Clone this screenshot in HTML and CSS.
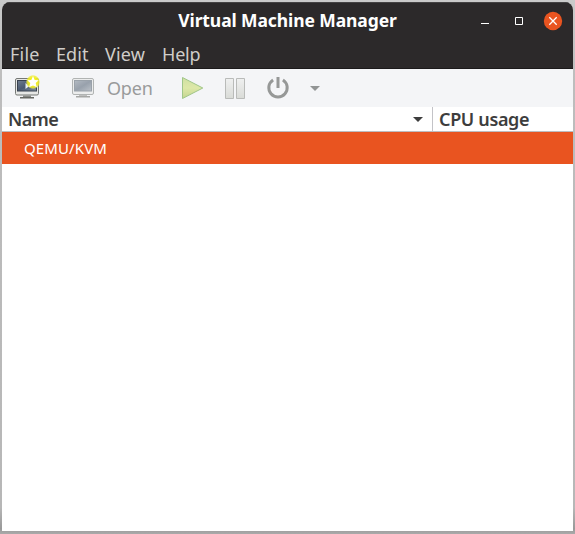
FILE: index.html
```html
<!DOCTYPE html>
<html lang="en">
<head>
<meta charset="utf-8">
<title>Virtual Machine Manager</title>
<link rel="stylesheet" href="styles.css">
</head>
<body>
<div class="window">
  <header class="titlebar">
    <h1 class="title">Virtual Machine Manager</h1>
    <div class="controls">
      <svg width="18" height="18" viewBox="0 0 18 18"><path d="M5 11.5h8" stroke="#fff"/></svg>
      <svg width="18" height="18" viewBox="0 0 18 18"><path d="M5.5 5.5h7v7h-7z" fill="none" stroke="#fff"/></svg>
      <svg width="18" height="18" viewBox="0 0 18 18"><circle cx="9" cy="9" r="9.2" fill="#e95420"/><path d="M5.3 5.3l7.4 7.4m0-7.4l-7.4 7.4" stroke="#fff" stroke-width="1.3"/></svg>
    </div>
  </header>
  <nav class="menubar">
    <span class="file">File</span><span class="edit">Edit</span><span class="view">View</span><span class="help">Help</span>
  </nav>
  <div class="toolbar">
    <svg class="new" width="26" height="24" viewBox="0 0 26 24">
      <defs>
        <linearGradient id="screen" x2="1" y2="1"><stop stop-color="#6f7d90"/><stop offset=".5" stop-color="#4a5970"/><stop offset="1" stop-color="#8290a2"/></linearGradient>
        <radialGradient id="glow"><stop offset=".6" stop-color="#f2ee22"/><stop offset=".85" stop-color="#f0ee32" stop-opacity=".75"/><stop offset="1" stop-color="#f0f060" stop-opacity="0"/></radialGradient>
      </defs>
      <rect x="1.5" y="2.5" width="23" height="16.5" rx="1.5" fill="#e6e7e5" stroke="#757875"/>
      <rect x="3.5" y="4.5" width="19" height="10.5" fill="url(#screen)" stroke="#39424f"/>
      <path d="M9 19.5h8v2H9z" fill="#888a86"/><path d="M6 21.8h14" stroke="#666863" stroke-width="1.6"/>
      <path d="M11.5 7v6l4-3z" fill="#e8edf3"/>
      <circle cx="19" cy="6" r="7.2" fill="url(#glow)"/>
      <path d="M19 .1l1.7 3.8 4 .3-3 2.9 1.2 4.2L19 9.4l-3.9 1.9 1.2-4.2-3-2.9 4-.3z" fill="#fff"/>
    </svg>
    <div class="open">
      <svg width="24" height="22" viewBox="0 0 24 22">
        <defs><linearGradient id="dim" x2="1" y2="1"><stop stop-color="#b3bac2"/><stop offset=".5" stop-color="#98a1ac"/><stop offset="1" stop-color="#bbc1c8"/></linearGradient></defs>
        <rect x="1.5" y="1.5" width="21" height="16" rx="1.5" fill="#eceded" stroke="#b1b4b3"/>
        <rect x="3.5" y="3.5" width="17" height="10.5" fill="url(#dim)" stroke="#9aa2aa"/>
        <path d="M8 18h8v2H8z" fill="#bfc0bf"/><path d="M5 19.7h14" stroke="#a6a7a5" stroke-width="1.5"/>
      </svg>
      <span>Open</span>
    </div>
    <svg class="play" width="24" height="24" viewBox="0 0 24 24"><defs><linearGradient id="green" x2="0" y2="1"><stop stop-color="#cfe0a2"/><stop offset=".5" stop-color="#dde8a8"/><stop offset="1" stop-color="#c4d58f"/></linearGradient></defs><path d="M1.5 1.5v21L21.8 12z" fill="url(#green)" stroke="#a0c689" stroke-linejoin="round"/></svg>
    <svg class="pause" width="20" height="21" viewBox="0 0 20 21"><defs><linearGradient id="gray" x2="0" y2="1"><stop stop-color="#eff0f0"/><stop offset="1" stop-color="#d9dbd7"/></linearGradient></defs><path d="M.5.5h8v20h-8zm11 0h8v20h-8z" fill="url(#gray)" stroke="#b9bbb9"/></svg>
    <svg class="power" width="24" height="24" viewBox="0 0 24 24"><path d="M7.1 3.9a9.2 9.2 0 1 0 9.8 0" fill="none" stroke="#969897" stroke-width="3"/><path d="M12 1v11" stroke="#969897" stroke-width="3"/></svg>
    <svg class="more" width="10" height="5" viewBox="0 0 10 5"><path d="M0 0h10L5 5z" fill="#929595"/></svg>
  </div>
  <main class="list">
    <div class="columns">
      <div class="column name-column"><span class="name">Name</span><svg width="10" height="5" viewBox="0 0 10 5"><path d="M0 0h10L5 5z" fill="#3d3d3d"/></svg></div>
      <div class="column cpu-column"><span class="cpu">CPU usage</span></div>
    </div>
    <div class="row"><span>QEMU/KVM</span></div>
  </main>
</div>
</body>
</html>
```
FILE: styles.css
```css
* { box-sizing: border-box; }
body {
  margin: 0;
  padding: 2px;
  height: 534px;
  overflow: hidden;
  background: linear-gradient(#cacaca, #bdbdbd 15%, #b7b7b7 95%, #999 99%, #aaa);
  font-family: "Noto Sans", sans-serif;
  font-size: 18px;
}
svg { display: block; flex: none; overflow: visible; }
span, h1 { white-space: nowrap; }
.window {
  width: 571px;
  height: 529px;
  overflow: hidden;
  border-radius: 8px 8px 0 0;
  background: #fff;
}
.titlebar {
  display: grid;
  grid-template-columns: 1fr auto 1fr;
  align-items: center;
  height: 37px;
  background: #2c292a;
  border-top: 1px solid #444243;
  color: #fff;
}
.title {
  grid-column: 2;
  margin: 0;
  padding-bottom: 2px;
  font-size: 17.5px;
  font-weight: 700;
  line-height: 34px;
  letter-spacing: -.1px;
}
.controls { display: flex; justify-content: flex-end; gap: 16px; padding-right: 11px; }
.menubar {
  display: flex;
  height: 30px;
  padding-left: 8px;
  background: #2c292a;
  border-bottom: 1px solid #1c1a1b;
  color: #d0cdc9;
  line-height: 30px;
}
.menubar span { flex: none; }
.file { width: 46px; letter-spacing: .2px; }
.edit { width: 49px; letter-spacing: .1px; }
.view { width: 57px; letter-spacing: .2px; }
.help { letter-spacing: -.2px; }
.toolbar {
  display: flex;
  align-items: center;
  height: 38px;
  padding-left: 12px;
  background: #f4f5f7;
}
.open { display: flex; align-items: center; width: 112px; margin-left: 31px; gap: 12px; color: #999b9b; }
.open span { line-height: 38px; letter-spacing: -.2px; }
.play { margin-left: -2px; }
.pause { margin-left: 20px; }
.power { margin-left: 21px; }
.more { margin-left: 20px; }
.columns { display: flex; height: 25px; border-bottom: 1px solid #bdbdc0; color: #3d3d3d; font-weight: 600; line-height: 24px; }
.column { display: flex; align-items: center; }
.name-column { width: 431px; justify-content: space-between; padding: 0 9px 0 6px; border-right: 1px solid #c3c3c7; }
.name { letter-spacing: -.6px; }
.cpu { letter-spacing: -.35px; }
.cpu-column { padding-left: 6px; }
.row { height: 32px; padding-left: 22px; background: #e95420; color: #fff; font-size: 15px; line-height: 32px; letter-spacing: .12px; }
```
